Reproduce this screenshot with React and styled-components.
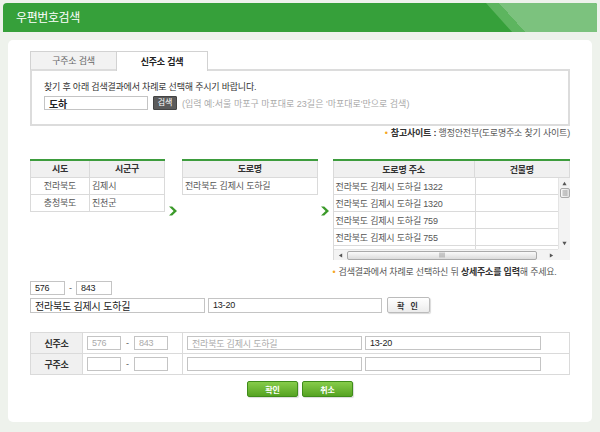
import React from "react";
import styled, { createGlobalStyle } from "styled-components";

const GlobalStyle = createGlobalStyle`
  html, body { margin: 0; padding: 0; background: #eef2ec; }
  body {
    font-family: "Liberation Sans", "Noto Sans CJK KR", sans-serif;
    font-size: 9px;
    letter-spacing: -0.2px;
    color: #333;
  }
  * { box-sizing: border-box; }
`;

const Frame = styled.div`
  width: 600px;
  height: 432px;
  padding: 3px;
  background: #eef2ec;
  overflow: hidden;
`;

const Header = styled.div`
  position: relative;
  height: 29px;
  background: #36a03a;
  border-radius: 4px 2px 0 0;
  overflow: hidden;
  display: flex;
  align-items: center;
  padding-left: 13px;
  &::after {
    content: "";
    position: absolute;
    top: 0;
    left: 483px;
    width: 200px;
    height: 100%;
    background: linear-gradient(to right, #5db55f 0 13px, #7cc27e 13px);
    transform: skewX(42deg);
    transform-origin: top left;
  }
`;

const Title = styled.h1`
  position: relative;
  z-index: 1;
  margin: 0;
  color: #fff;
  font-size: 12px;
  font-weight: normal;
  letter-spacing: -0.4px;
  line-height: 1;
`;

const Card = styled.div`
  margin: 8px 0 0 5px;
  width: 584px;
  height: 382px;
  background: #fff;
  border-radius: 5px;
  padding: 11px 22px 0;
`;

const TabRow = styled.div`
  display: flex;
  height: 20px;
  width: 540px;
`;

const Tab = styled.div`
  width: ${(p) => p.w}px;
  display: flex;
  align-items: center;
  justify-content: center;
  border: 1px solid #d2d2d2;
  border-bottom: ${(p) => (p.active ? "none" : "2px solid #dcdcdc")};
  margin-left: ${(p) => (p.active ? "-1px" : "0")};
  background: ${(p) => (p.active ? "#fff" : "#f2f2f2")};
  color: ${(p) => (p.active ? "#222" : "#666")};
  font-weight: ${(p) => (p.active ? "bold" : "normal")};
`;

const TabFill = styled.div`
  flex: 1;
  border-bottom: 2px solid #dcdcdc;
`;

const SearchBox = styled.div`
  width: 540px;
  height: 55px;
  border: 2px solid #dcdcdc;
  border-top: none;
  padding: 9px 12px 0;
`;

const Guide = styled.p`
  margin: 0;
  line-height: 14px;
  color: #333;
`;

const SearchRow = styled.div`
  display: flex;
  align-items: center;
  margin-top: 2px;
`;

const Field = styled.div`
  width: ${(p) => p.w}px;
  height: ${(p) => p.h || 14}px;
  border: 1px solid #c4c4c4;
  display: flex;
  align-items: center;
  padding: 0 4px;
  color: ${(p) => (p.muted ? "#aaa" : "#222")};
  font-size: ${(p) => (p.big ? "10px" : "9px")};
  font-weight: ${(p) => (p.bold ? "bold" : "normal")};
  white-space: nowrap;
  overflow: hidden;
`;

const DarkButton = styled.button`
  margin-left: 5px;
  width: 24px;
  height: 14px;
  padding: 0;
  border: 1px solid #444;
  border-radius: 1px;
  background: #5b5b5b;
  color: #fff;
  font: inherit;
  font-size: 8px;
  line-height: 1;
`;

const Hint = styled.span`
  margin-left: 5px;
  color: #aaa;
  letter-spacing: 0;
`;

const RefLine = styled.p`
  margin: 2px 0 0;
  width: 540px;
  text-align: right;
  line-height: 11px;
  color: #555;
  b { color: #333; }
`;

const Dot = styled.span`
  color: #f5a623;
  margin-right: 3px;
`;

const TablesRow = styled.div`
  display: flex;
  align-items: flex-start;
  margin-top: 20px;
`;

const Grid = styled.table`
  width: ${(p) => p.w}px;
  border-collapse: collapse;
  table-layout: fixed;
  border-top: 2px solid #3d9c3d;
  th, td {
    height: 17px;
    padding: 0 2px;
    border: 1px solid #dadada;
    white-space: nowrap;
    overflow: hidden;
  }
  th {
    background: #f0f0f0;
    color: #333;
    font-weight: bold;
  }
  td { color: #555; }
  td.c { text-align: center; }
`;

const ArrowCol = styled.div`
  width: ${(p) => p.w}px;
  padding: 47px 0 0 ${(p) => p.pl}px;
`;

const Chevron = () => (
  <svg width="10" height="10" viewBox="0 0 10 10">
    <path d="M1 0.5 L4.2 0.5 L9 5 L4.2 9.5 L1 9.5 L5.6 5 Z" fill="#3b9a2a" />
  </svg>
);

// tiny scrollbar arrow, rotated per direction
const Tri = ({ dir }) => {
  const rot = { up: 0, right: 90, down: 180, left: 270 }[dir];
  return (
    <svg width="5" height="5" viewBox="0 0 6 6" style={{ transform: `rotate(${rot}deg)` }}>
      <path d="M3 1 L5.5 5 L0.5 5 Z" fill="#555" />
    </svg>
  );
};

const Grip = ({ vertical }) => (
  <svg width="6" height="6" viewBox="0 0 6 6" style={vertical ? { transform: "rotate(90deg)" } : undefined}>
    <path d="M1 0.5 V5.5 M3 0.5 V5.5 M5 0.5 V5.5" stroke="#888" strokeWidth="0.8" />
  </svg>
);

const ResultCol = styled.div`
  width: 238px;
`;

const ResultHead = styled.div`
  display: grid;
  grid-template-columns: 142px 1fr;
  height: 19px;
  border-top: 2px solid #3d9c3d;
  background: #f0f0f0;
  font-weight: bold;
  color: #333;
  span {
    display: flex;
    align-items: center;
    justify-content: center;
    border: 1px solid #dadada;
    border-top: none;
  }
  span + span { border-left: none; }
`;

const ResultBody = styled.div`
  display: grid;
  grid-template-columns: 1fr 12px;
  grid-template-rows: 71px 11px;
  border-left: 1px solid #dadada;
`;

const Rows = styled.div`
  overflow: hidden;
`;

const Row = styled.div`
  display: grid;
  grid-template-columns: 141px 1fr;
  height: 17px;
  border-bottom: 1px solid #dadada;
  color: #555;
  span {
    display: flex;
    align-items: center;
    padding-left: 2px;
    white-space: nowrap;
  }
  span + span { border-left: 1px solid #dadada; }
`;

const VBar = styled.div`
  background: #f3f3f3;
  border-left: 1px solid #e4e4e4;
  display: flex;
  flex-direction: column;
  align-items: center;
  padding: 3px 0 3px;
  line-height: 0;
`;

const VThumb = styled.div`
  width: 10px;
  height: 10px;
  margin: 2px 0 auto;
  border: 1px solid #aaa;
  border-radius: 2px;
  background: linear-gradient(to right, #f8f8f8, #e0e0e0);
  display: flex;
  align-items: center;
  justify-content: center;
`;

const HBar = styled.div`
  background: #f3f3f3;
  border-top: 1px solid #e4e4e4;
  display: flex;
  align-items: center;
  padding: 0 4px;
  gap: 4px;
  line-height: 0;
`;

const HThumb = styled.div`
  flex: 1;
  height: 9px;
  margin-right: 8px;
  border: 1px solid #aaa;
  border-radius: 2px;
  background: linear-gradient(#fafafa, #dcdcdc);
  display: flex;
  align-items: center;
  justify-content: center;
`;

const Corner = styled.div`
  background: #f3f3f3;
`;

const Note = styled.p`
  margin: 6px 0 0;
  line-height: 12px;
  color: #555;
  white-space: nowrap;
  b { color: #333; }
`;

const PostRow = styled.div`
  display: flex;
  align-items: center;
  gap: ${(p) => p.gap || 0}px;
  margin-top: ${(p) => p.mt}px;
`;

const Dash = styled.span`
  width: ${(p) => p.w}px;
  text-align: center;
  color: #555;
`;

const WhiteButton = styled.button`
  margin-left: 2px;
  width: 43px;
  height: 16px;
  padding: 0;
  border: 1px solid #bbb;
  border-radius: 2px;
  background: linear-gradient(#fff, #ececec);
  box-shadow: 1px 1px 1px rgba(0, 0, 0, 0.15);
  font: inherit;
  font-size: 8px;
  font-weight: bold;
  letter-spacing: 2px;
  color: #333;
`;

const AddrTable = styled.table`
  margin-top: 19px;
  width: 540px;
  border-collapse: collapse;
  table-layout: fixed;
  th, td {
    height: 21px;
    border: 1px solid #dadada;
    padding: 0 4px;
  }
  th {
    background: #f0f0f0;
    font-weight: bold;
    color: #333;
  }
`;

const Cell = styled.div`
  display: flex;
  align-items: center;
  gap: ${(p) => p.gap || 0}px;
`;

const Actions = styled.div`
  display: flex;
  justify-content: center;
  gap: 4px;
  margin-top: 6px;
`;

const GreenButton = styled.button`
  width: 51px;
  height: 16px;
  padding: 0;
  border: 1px solid #3f8c1a;
  border-radius: 2px;
  background: linear-gradient(#86cc4a, #55a322);
  box-shadow: 1px 1px 1px rgba(0, 0, 0, 0.15);
  color: #fff;
  font: inherit;
  font-size: 8px;
  font-weight: bold;
`;

const roads = [
  "전라북도 김제시 도하길 1322",
  "전라북도 김제시 도하길 1320",
  "전라북도 김제시 도하길 759",
  "전라북도 김제시 도하길 755",
  "전라북도 김제시 도하길 751",
];

export default function App() {
  return (
    <Frame>
      <GlobalStyle />
      <Header>
        <Title>우편번호검색</Title>
      </Header>
      <Card>
        <TabRow>
          <Tab w={87}>구주소 검색</Tab>
          <Tab w={92} active>신주소 검색</Tab>
          <TabFill />
        </TabRow>
        <SearchBox>
          <Guide>찾기 후 아래 검색결과에서 차례로 선택해 주시기 바랍니다.</Guide>
          <SearchRow>
            <Field w={104} big bold>도하</Field>
            <DarkButton>검색</DarkButton>
            <Hint>(입력 예:서울 마포구 마포대로 23길은 '마포대로'만으로 검색)</Hint>
          </SearchRow>
        </SearchBox>
        <RefLine>
          <Dot>•</Dot>
          <b>참고사이트 :</b> 행정안전부(도로명주소 찾기 사이트)
        </RefLine>

        <TablesRow>
          <Grid w={134}>
            <colgroup>
              <col style={{ width: 59 }} />
              <col style={{ width: 75 }} />
            </colgroup>
            <thead>
              <tr><th>시도</th><th>시군구</th></tr>
            </thead>
            <tbody>
              <tr><td className="c">전라북도</td><td>김제시</td></tr>
              <tr><td className="c">충청북도</td><td>진천군</td></tr>
            </tbody>
          </Grid>
          <ArrowCol w={17} pl={3}><Chevron /></ArrowCol>
          <Grid w={136}>
            <thead>
              <tr><th>도로명</th></tr>
            </thead>
            <tbody>
              <tr><td>전라북도 김제시 도하길</td></tr>
            </tbody>
          </Grid>
          <ArrowCol w={15} pl={2}><Chevron /></ArrowCol>
          <ResultCol>
            <ResultHead>
              <span>도로명 주소</span>
              <span>건물명</span>
            </ResultHead>
            <ResultBody>
              <Rows>
                {roads.map((r) => (
                  <Row key={r}>
                    <span>{r}</span>
                    <span />
                  </Row>
                ))}
              </Rows>
              <VBar>
                <Tri dir="up" />
                <VThumb><Grip vertical /></VThumb>
                <Tri dir="down" />
              </VBar>
              <HBar>
                <Tri dir="left" />
                <HThumb><Grip /></HThumb>
                <Tri dir="right" />
              </HBar>
              <Corner />
            </ResultBody>
            <Note>
              <Dot>•</Dot>
              검색결과에서 차례로 선택하신 뒤 <b>상세주소를 입력</b>해 주세요.
            </Note>
          </ResultCol>
        </TablesRow>

        <PostRow mt={3}>
          <Field w={35}>576</Field>
          <Dash w={11}>-</Dash>
          <Field w={36}>843</Field>
        </PostRow>
        <PostRow mt={2} gap={3}>
          <Field w={175} h={15} big>전라북도 김제시 도하길</Field>
          <Field w={174} h={15}>13-20</Field>
          <WhiteButton>확 인</WhiteButton>
        </PostRow>

        <AddrTable>
          <colgroup>
            <col style={{ width: 52 }} />
            <col style={{ width: 100 }} />
            <col />
          </colgroup>
          <tbody>
            <tr>
              <th>신주소</th>
              <td>
                <Cell>
                  <Field w={34} muted>576</Field>
                  <Dash w={13}>-</Dash>
                  <Field w={34} muted>843</Field>
                </Cell>
              </td>
              <td>
                <Cell gap={3}>
                  <Field w={175} muted>전라북도 김제시 도하길</Field>
                  <Field w={176}>13-20</Field>
                </Cell>
              </td>
            </tr>
            <tr>
              <th>구주소</th>
              <td>
                <Cell>
                  <Field w={34} />
                  <Dash w={13}>-</Dash>
                  <Field w={34} />
                </Cell>
              </td>
              <td>
                <Cell gap={3}>
                  <Field w={175} />
                  <Field w={176} />
                </Cell>
              </td>
            </tr>
          </tbody>
        </AddrTable>

        <Actions>
          <GreenButton>확인</GreenButton>
          <GreenButton>취소</GreenButton>
        </Actions>
      </Card>
    </Frame>
  );
}
